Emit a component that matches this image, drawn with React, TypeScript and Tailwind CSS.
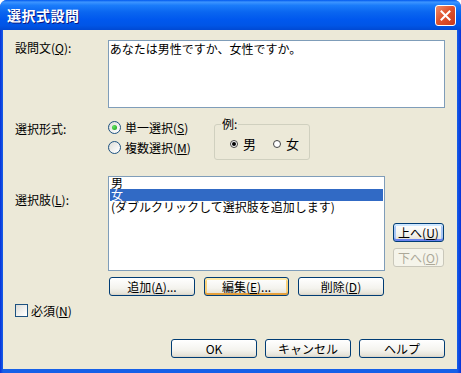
import React from 'react';

const jp = "font-['MS_UI_Gothic','Noto_Sans_CJK_JP',sans-serif]";

function XpButton({
	children,
	className = '',
	variant = 'normal',
}: {
	children: React.ReactNode;
	className?: string;
	variant?: 'normal' | 'hot' | 'focus' | 'disabled';
}) {
	const look = {
		normal: 'border-[#003c74] text-black bg-[linear-gradient(180deg,#ffffff_0%,#f4f3ee_60%,#e6e3d8_90%,#d6d0c5_100%)]',
		hot: 'border-[#003c74] text-black bg-[linear-gradient(180deg,#ffffff_0%,#f4f3ee_60%,#e6e3d8_90%,#d6d0c5_100%)] shadow-[inset_0_2px_0_#ffeaa8,inset_0_-2px_0_#e5a03c,inset_2px_0_0_#fad27c,inset_-2px_0_0_#fad27c]',
		focus: 'border-[#003c74] text-black bg-[linear-gradient(180deg,#ffffff_0%,#f4f3ee_60%,#e6e3d8_90%,#d6d0c5_100%)] shadow-[inset_0_2px_0_#cee7ff,inset_0_-2px_0_#6982ee,inset_2px_0_0_#a9c6f5,inset_-2px_0_0_#a9c6f5]',
		disabled: 'border-[#c9c7ba] text-[#aca899] bg-[#f5f4ea]',
	}[variant];
	return (
		<div
			className={`h-[19px] flex items-center justify-center rounded-[3px] border text-[12px] leading-[13px] ${look} ${className}`}
		>
			{children}
		</div>
	);
}

function Radio({ checked }: { checked?: boolean }) {
	return (
		<span className="w-[13px] h-[13px] rounded-full border border-[#1c5180] bg-[linear-gradient(135deg,#dcdcd7_0%,#ffffff_90%)] flex items-center justify-center shrink-0">
			{checked && (
				<span className="w-[5px] h-[5px] rounded-full bg-[radial-gradient(circle_at_35%_35%,#5fe35f,#1a9b1a)]" />
			)}
		</span>
	);
}

function MiniRadio({ checked }: { checked?: boolean }) {
	return (
		<span className="w-[8px] h-[8px] rounded-full border border-[#444] bg-white flex items-center justify-center shrink-0">
			{checked && <span className="w-[4px] h-[4px] rounded-full bg-black" />}
		</span>
	);
}

export default function App() {
	return (
		<div className={`w-[461px] h-[373px] bg-white ${jp}`}>
			<div className="w-full h-full flex flex-col rounded-t-[7px] overflow-hidden bg-[linear-gradient(90deg,#0831d9_0px,#1660e8_3px,#1660e8_457px,#0831d9_461px)]">
				{/* Title bar */}
				<div className="h-[30px] shrink-0 flex items-center justify-between pl-[7px] pr-[5px] bg-[linear-gradient(180deg,#0058ee_0%,#3d95ff_7%,#1a7cfa_18%,#0a66f0_40%,#0058ee_65%,#0055e6_85%,#0049d3_100%)]">
					<span className="text-white font-bold text-[14px] leading-[16px] tracking-[0.5px] [text-shadow:1px_1px_#0a1883]">
						選択式設問
					</span>
					<div className="w-[21px] h-[21px] rounded-[3px] border border-white bg-[linear-gradient(135deg,#ef8e6d_0%,#e0542f_45%,#c8391b_100%)] flex items-center justify-center">
						<svg width="11" height="11" viewBox="0 0 11 11">
							<path d="M1.5 1.5 L9.5 9.5 M9.5 1.5 L1.5 9.5" stroke="white" strokeWidth="2" strokeLinecap="square" />
						</svg>
					</div>
				</div>

				{/* Client area */}
				<div className="flex-1 ml-[3px] mr-[4px] mb-[4px] bg-[#ece9d8] flex flex-col pl-[12px] pr-[12px] pt-[10px] text-[12px] leading-[13px] text-black">
					{/* Question */}
					<div className="flex">
						<div className="w-[93px] pt-[1px]">
							設問文(<u>Q</u>):
						</div>
						<div className="w-[338px] h-[68px] border border-[#7f9db9] bg-white px-[1px] pt-[1px]">
							あなたは男性ですか、女性ですか。
						</div>
					</div>

					{/* Selection type */}
					<div className="flex mt-[10px]">
						<div className="w-[93px] pt-[4px]">選択形式:</div>
						<div className="w-[106px] flex flex-col pt-[3px]">
							<div className="h-[20px] flex items-start gap-[4px]">
								<Radio checked />
								<span>
									単一選択(<u>S</u>)
								</span>
							</div>
							<div className="h-[20px] flex items-start gap-[4px]">
								<Radio />
								<span>
									複数選択(<u>M</u>)
								</span>
							</div>
						</div>
						<fieldset className="w-[96px] h-[42px] border border-[#d0d0bf] rounded-[3px] px-[6px]">
							<legend className="px-[1px] leading-[12px]">例:</legend>
							<div className="flex items-center pl-[9px] pt-[7px]">
								<MiniRadio checked />
								<span className="ml-[5px] text-[13px]">男</span>
								<span className="ml-[17px]">
									<MiniRadio />
								</span>
								<span className="ml-[5px] text-[13px]">女</span>
							</div>
						</fieldset>
					</div>

					{/* Choices */}
					<div className="flex mt-[15px]">
						<div className="w-[93px] pt-[17px]">
							選択肢(<u>L</u>):
						</div>
						<div className="w-[277px] h-[95px] border border-[#7f9db9] bg-white px-[1px] leading-[12px]">
							<div className="h-[12px] pl-[1px]">男</div>
							<div className="h-[12px] pl-[1px] bg-[#316ac5] text-white">女</div>
							<div className="h-[12px] pl-[1px]">(ダブルクリックして選択肢を追加します)</div>
						</div>
						<div className="ml-[8px] pt-[47px] flex flex-col gap-[6px]">
							<XpButton className="w-[51px]" variant="focus">
								上へ(<u>U</u>)
							</XpButton>
							<XpButton className="w-[51px]" variant="disabled">
								下へ(<u>O</u>)
							</XpButton>
						</div>
					</div>

					{/* Edit buttons */}
					<div className="flex ml-[94px] mt-[6px] gap-[9px]">
						<XpButton className="w-[86px]">
							追加(<u>A</u>)...
						</XpButton>
						<XpButton className="w-[85px]" variant="hot">
							編集(<u>E</u>)...
						</XpButton>
						<XpButton className="w-[86px]">
							削除(<u>D</u>)
						</XpButton>
					</div>

					{/* Required */}
					<div className="flex items-center mt-[8px] gap-[3px]">
						<span className="w-[13px] h-[13px] border border-[#1c5180] bg-[linear-gradient(135deg,#dcdcd7_0%,#ffffff_90%)]" />
						<span>
							必須(<u>N</u>)
						</span>
					</div>

					{/* Footer */}
					<div className="mt-auto pb-[11px] flex justify-end gap-[8px]">
						<XpButton className="w-[86px]">OK</XpButton>
						<XpButton className="w-[86px]">キャンセル</XpButton>
						<XpButton className="w-[86px]">ヘルプ</XpButton>
					</div>
				</div>
			</div>
		</div>
	);
}
